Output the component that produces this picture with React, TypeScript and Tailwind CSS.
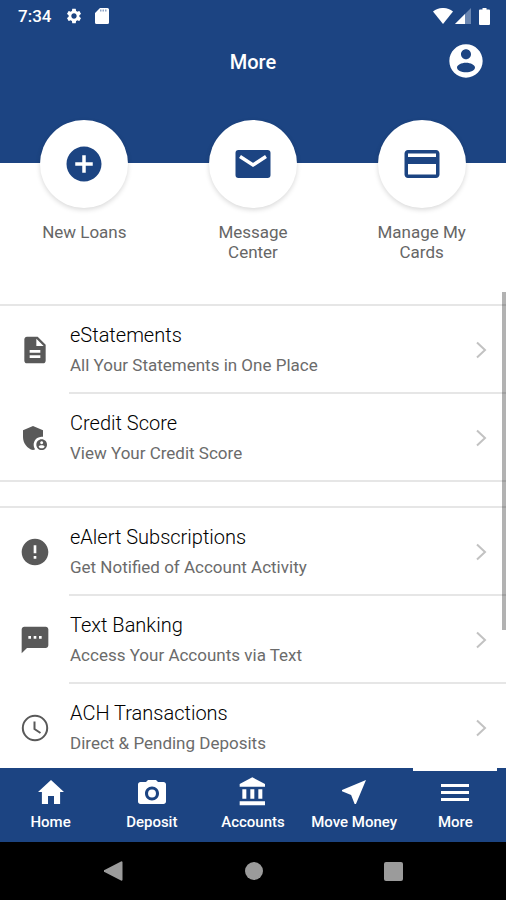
import React from "react";
import type { IconType } from "react-icons";
import {
  MdAddCircle,
  MdAdminPanelSettings,
  MdDescription,
  MdError,
  MdNearMe,
  MdSettings,
  MdTextsms,
} from "react-icons/md";
import { IoMdCamera, IoMdHome } from "react-icons/io";

type IconProps = { className?: string };
type Icon = IconType | ((props: IconProps) => React.JSX.Element);

const CardIcon = ({ className }: IconProps) => (
  <svg viewBox="0 0 24 24" fill="currentColor" className={className}>
    <path d="M20 4H4c-1.11 0-1.99.89-1.99 2L2 18c0 1.11.89 2 2 2h16c1.11 0 2-.89 2-2V6c0-1.11-.89-2-2-2zm0 14H4v-6h16v6zm0-10H4V6h16v2z" />
  </svg>
);

const MailIcon = ({ className }: IconProps) => (
  <svg viewBox="0 0 42 42" className={className}>
    <rect x="3.5" y="7" width="35" height="28" rx="3" fill="currentColor" />
    <path d="M8 13.5L21 22L34 13.5" fill="none" stroke="#fff" strokeWidth="3.5" />
  </svg>
);

const ClockIcon = ({ className }: IconProps) => (
  <svg viewBox="0 0 32 32" fill="none" stroke="currentColor" strokeWidth="2" className={className}>
    <circle cx="16" cy="16" r="12.2" />
    <path d="M15.500 9.500V17l6 4" />
  </svg>
);

const BankIcon = ({ className }: IconProps) => (
  <svg viewBox="0 0 24 24" fill="currentColor" className={className}>
    <path d="M4 10v7h3v-7H4zm6 0v7h3v-7h-3zM2 22h19v-3H2v3zm14-12v7h3v-7h-3zm-4.500-9L2 6v2h19V6l-9.500-5z" />
  </svg>
);

const AccountIcon = ({ className }: IconProps) => (
  <svg viewBox="0 0 24 24" fill="currentColor" className={className}>
    <path d="M12 2C6.48 2 2 6.48 2 12s4.48 10 10 10 10-4.48 10-10S17.52 2 12 2zm0 3c1.66 0 3 1.34 3 3s-1.34 3-3 3-3-1.34-3-3 1.34-3 3-3zm0 13.800c-2.900 0-5.400-1.300-5.400-2.900s2.500-2.900 5.400-2.900 5.400 1.300 5.400 2.900-2.500 2.900-5.400 2.900z" />
  </svg>
);

const MenuIcon = ({ className }: IconProps) => (
  <svg viewBox="0 0 32 32" fill="currentColor" className={className}>
    <path d="M2 8h28v3H2zM2 15h28v3H2zM2 22h28v3H2z" />
  </svg>
);

const ChevronIcon = () => (
  <svg viewBox="0 0 12 18" className="h-[18px] w-3 shrink-0" fill="none">
    <path d="M2 1.5L10 9L2 16.5" stroke="#c2c2c2" strokeWidth="2" />
  </svg>
);

const actions: { label: string; icon: Icon }[] = [
  { label: "New Loans", icon: MdAddCircle },
  { label: "Message Center", icon: MailIcon },
  { label: "Manage My Cards", icon: CardIcon },
];

const sections: { title: string; text: string; icon: Icon }[][] = [
  [
    { title: "eStatements", text: "All Your Statements in One Place", icon: MdDescription },
    { title: "Credit Score", text: "View Your Credit Score", icon: MdAdminPanelSettings },
  ],
  [
    { title: "eAlert Subscriptions", text: "Get Notified of Account Activity", icon: MdError },
    { title: "Text Banking", text: "Access Your Accounts via Text", icon: MdTextsms },
    { title: "ACH Transactions", text: "Direct & Pending Deposits", icon: ClockIcon },
  ],
];

const tabs: { label: string; icon: Icon; active?: boolean }[] = [
  { label: "Home", icon: IoMdHome },
  { label: "Deposit", icon: IoMdCamera },
  { label: "Accounts", icon: BankIcon },
  { label: "Move Money", icon: MdNearMe },
  { label: "More", icon: MenuIcon, active: true },
];

function StatusBar() {
  return (
    <div className="flex h-8 items-center justify-between px-4">
      <div className="flex items-center">
        <span className="ml-0.5 text-[17px] leading-6 font-medium">7:34</span>
        <MdSettings className="ml-3.5 h-[18px] w-[18px]" />
        {/* sd card */}
        <svg viewBox="0 0 14 16" className="ml-3 h-4 w-3.5">
          <path d="M5 0h7.500A1.500 1.500 0 0 1 14 1.500v13a1.500 1.500 0 0 1-1.500 1.500h-11A1.500 1.500 0 0 1 0 14.500V5z" fill="#fff" />
          <path d="M5 1.500h1.500v2H5zM7.500 1.500H9v2H7.500zM10 1.500h1.500v2H10z" fill="#8fa5c6" />
        </svg>
      </div>
      <div className="flex items-center">
        {/* wifi */}
        <svg viewBox="0 0 20 16" className="h-4 w-5">
          <path d="M0 3.500C6-1.200 14-1.200 20 3.500L10 16z" fill="#fff" />
        </svg>
        {/* signal */}
        <svg viewBox="0 0 16 16" className="ml-0.5 h-4 w-4">
          <path d="M16 0v16H0z" fill="#6a86b1" />
          <path d="M10 6v10H0z" fill="#fff" />
        </svg>
        {/* battery */}
        <svg viewBox="0 0 11 17" className="ml-2 h-[17px] w-[11px]">
          <path d="M3.500 0h4v1.500H10a1 1 0 0 1 1 1V16a1 1 0 0 1-1 1H1a1 1 0 0 1-1-1V2.500a1 1 0 0 1 1-1h2.500z" fill="#fff" />
        </svg>
      </div>
    </div>
  );
}

function Header() {
  return (
    <header className="h-[163px] shrink-0 bg-[#1c4482] text-white">
      <StatusBar />
      <div className="grid grid-cols-3 items-center px-5 pt-[9px]">
        <h1 className="col-start-2 pt-0.5 text-center text-xl leading-6 font-medium">More</h1>
        <button type="button" aria-label="Profile" className="justify-self-end">
          <AccountIcon className="h-10 w-10" />
        </button>
      </div>
    </header>
  );
}

function Actions() {
  return (
    <div className="z-10 -mt-[43px] grid h-[184px] shrink-0 grid-cols-3">
      {actions.map(({ label, icon: ActionIcon }) => (
        <button key={label} type="button" className="flex flex-col items-center">
          <span className="flex h-[88px] w-[88px] items-center justify-center rounded-full bg-white text-[#1c4482] shadow-[0_2px_5px_rgba(0,0,0,0.15)]">
            <ActionIcon className="h-[42px] w-[42px]" />
          </span>
          <span className="mt-3.5 w-28 text-[17px] leading-5 text-[#666]">{label}</span>
        </button>
      ))}
    </div>
  );
}

function Sections() {
  return (
    <div className="flex flex-col gap-6">
      {sections.map((items, i) => (
        <ul key={i} className="border-y-2 border-[#e6e6e6]">
          {items.map(({ title, text, icon: ItemIcon }) => (
            <li key={title} className="group">
              <a href="#" className="flex pl-[19px]">
                <ItemIcon className="mt-7 h-8 w-8 shrink-0 text-[#595959]" />
                <span className="ml-[18px] flex h-[88px] flex-1 items-center justify-between border-b-2 border-[#e6e6e6] pt-0.5 pr-[19px] group-last:h-[86px] group-last:border-b-0">
                  <span className="flex flex-col gap-1.5 pl-px">
                    <span className="text-xl leading-6 font-light text-black">{title}</span>
                    <span className="text-[17px] leading-6 text-[#6b6b6b]">{text}</span>
                  </span>
                  <ChevronIcon />
                </span>
              </a>
            </li>
          ))}
        </ul>
      ))}
    </div>
  );
}

function TabBar() {
  return (
    <nav className="grid h-[74px] shrink-0 grid-cols-5 bg-[#1c4482] text-white">
      {tabs.map(({ label, icon: TabIcon, active }) => (
        <a key={label} href="#" className="flex flex-col items-center">
          <span className={active ? "h-[3px] w-[84px] bg-white" : "h-[3px] w-[84px]"} />
          <TabIcon className="mt-[5px] h-8 w-8" />
          <span className="mt-1 text-[15px] leading-5 font-medium whitespace-nowrap">{label}</span>
        </a>
      ))}
    </nav>
  );
}

function SystemNav() {
  return (
    <div className="flex h-[58px] shrink-0 items-center justify-center gap-[121px] bg-black text-[#9b9b9b]">
      <button type="button" aria-label="Back">
        <svg viewBox="0 0 20 20" className="h-5 w-5" fill="currentColor">
          <path d="M17 0.500a1 1 0 0 1 1.500 1v17a1 1 0 0 1-1.500 1L0.500 11a1 1 0 0 1 0-2z" />
        </svg>
      </button>
      <button type="button" aria-label="Home" className="h-[18px] w-[18px] rounded-full bg-[#9b9b9b]" />
      <button type="button" aria-label="Recent apps" className="h-[19px] w-[19px] rounded-xs bg-[#9b9b9b]" />
    </div>
  );
}

export default function App() {
  return (
    <div className="flex h-screen flex-col bg-white font-[Roboto,sans-serif]">
      <Header />
      <Actions />
      <main className="relative min-h-0 flex-1">
        <div className="h-full overflow-hidden">
          <Sections />
        </div>
        {/* scroll thumb */}
        <div className="absolute -top-3 right-0 h-[338px] w-1 bg-black/30" />
      </main>
      <TabBar />
      <SystemNav />
    </div>
  );
}
